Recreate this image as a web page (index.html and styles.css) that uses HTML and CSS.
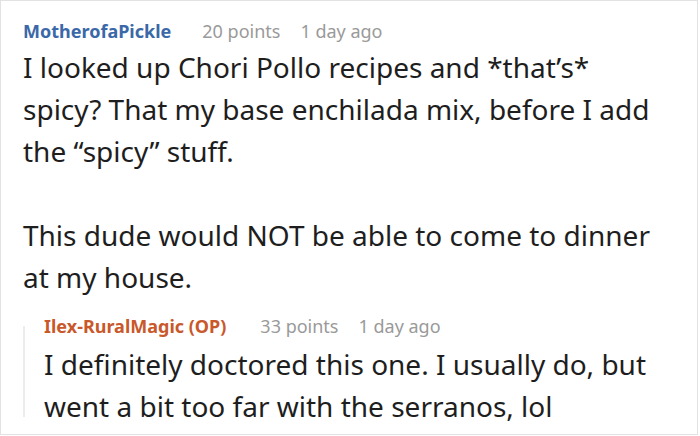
FILE: index.html
```html
<!DOCTYPE html>
<html>
<head><meta charset="utf-8"><link rel="stylesheet" href="styles.css"></head>
<body>
<div class="card">
  <div class="comment">
    <div class="meta"><span class="user">MotherofaPickle</span><span class="info">20 points</span><span class="info">1 day ago</span></div>
    <div class="text">
      <p>I looked up Chori Pollo recipes and *that’s* spicy? That my base enchilada mix, before I add the “spicy” stuff.</p>
      <p>This dude would NOT be able to come to dinner at my house.</p>
    </div>
    <div class="reply">
      <div class="meta"><span class="user op">Ilex-RuralMagic (OP)</span><span class="info">33 points</span><span class="info">1 day ago</span></div>
      <div class="text">
        <p>I definitely doctored this one. I usually do, but went a bit too far with the serranos, lol</p>
      </div>
    </div>
  </div>
</div>
</body>
</html>
```
FILE: styles.css
```css
html, body { margin: 0; padding: 0; background: #fff; }
body { font-family: "Noto Sans", sans-serif; }
.card {
  width: 698px; height: 435px; box-sizing: border-box;
  border: 1px solid #e2e2e2; overflow: hidden;
  padding: 18px 0 0 22px;
}
.meta { display: flex; align-items: baseline; height: 24px; line-height: 24px; white-space: nowrap; }
.user { font-weight: 700; font-size: 18px; color: #3a68a8; margin-right: 31px; }
.user.op { color: #c9582b; margin-right: 34px; }
.info { font-size: 18px; color: #9a9a9a; margin-right: 20px; }
.text { margin-top: 3px; width: 640px; }
.text p { margin: 0 0 42px; font-size: 28px; line-height: 42px; color: #1e1e1e; }
.text p:last-child { margin-bottom: 0; }
.reply { position: relative; margin-top: 16px; padding-left: 21px; }
.reply::before {
  content: ""; position: absolute; left: 0; top: 12px; bottom: 10px;
  width: 2px; background: #ececec;
}
.reply .text { margin-top: 5px; width: 620px; }
```
